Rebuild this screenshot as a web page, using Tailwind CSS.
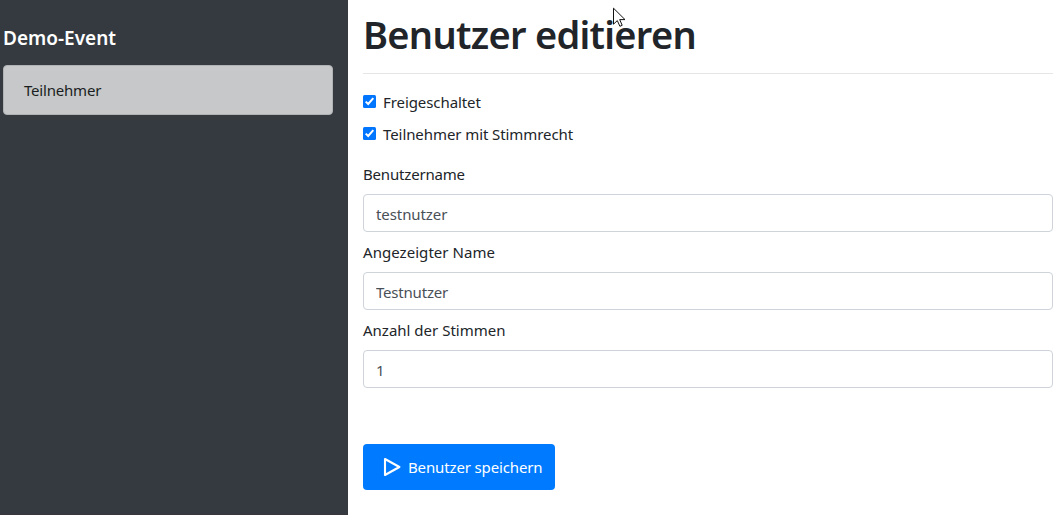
<!DOCTYPE html>
<html lang="de">
<head>
<meta charset="utf-8">
<title>Benutzer editieren</title>
<script src="https://cdn.jsdelivr.net/npm/@tailwindcss/browser@4"></script>
</head>
<body class="relative flex h-[515px] w-[1061px] overflow-hidden bg-white font-['Segoe_UI','Noto_Sans',sans-serif] text-[15px] leading-6 tracking-[-0.08px] text-[#212529]">
  <aside class="flex w-[348px] shrink-0 flex-col border-b border-[#3a3640] bg-[#343a40] pt-[26px] pr-[15px] pl-[3px]">
    <h2 class="text-[19px] leading-6 font-semibold text-white"><span class="tracking-[0px]">Demo-Event</span></h2>
    <a class="mt-[15px] flex h-[50px] items-center rounded-[4px] border border-[#b0b2b4] bg-[#c6c8ca] pl-5 tracking-[-0.2px] text-[#1b1e21]"><span>Teilnehmer</span></a>
  </aside>
  <main class="flex flex-1 flex-col pr-2 pl-[15px]">
    <h1 class="mt-[10px] h-[50px] text-[38px] leading-[48px] font-semibold tracking-[-0.7px]"><span>Benutzer editieren</span></h1>
    <hr class="mt-[13px] border-t border-[#e5e5e5]">
    <div class="mt-4 flex flex-col gap-2">
      <label class="flex h-6 items-center gap-[7px]">
        <svg class="mb-[1px] size-[13px]" viewBox="0 0 13 13"><rect width="13" height="13" rx="1.5" fill="#0075ff"/><path d="M2.7 6.6 5.2 9 10.3 3.2" fill="none" stroke="#fff" stroke-width="2"/></svg>
        <span>Freigeschaltet</span>
      </label>
      <label class="flex h-6 items-center gap-[7px]">
        <svg class="mb-[1px] size-[13px]" viewBox="0 0 13 13"><rect width="13" height="13" rx="1.5" fill="#0075ff"/><path d="M2.7 6.6 5.2 9 10.3 3.2" fill="none" stroke="#fff" stroke-width="2"/></svg>
        <span>Teilnehmer mit Stimmrecht</span>
      </label>
    </div>
    <div class="mt-4 flex flex-col gap-2">
      <label class="flex flex-col gap-2"><span class="tracking-[-0.18px]">Benutzername</span>
        <input class="h-[38px] rounded-[4px] border border-[#ced4da] px-3 pt-[1px] text-[#495057]" value="testnutzer"></label>
      <label class="flex flex-col gap-2"><span class="tracking-[0.05px]">Angezeigter Name</span>
        <input class="h-[38px] rounded-[4px] border border-[#ced4da] px-3 pt-[1px] tracking-[-0.2px] text-[#495057]" value="Testnutzer"></label>
      <label class="flex flex-col gap-2"><span class="tracking-[0px]">Anzahl der Stimmen</span>
        <input class="h-[38px] rounded-[4px] border border-[#ced4da] px-3 pt-[1px] text-[#495057]" value="1"></label>
    </div>
    <button class="mt-14 flex h-[46px] w-48 items-center rounded-[4px] bg-[#007bff] pl-[20px] text-white">
      <svg class="mr-[7px] h-[20px] w-[18px]" viewBox="0 0 18 20" fill="none" stroke="#fff" stroke-width="2.1" stroke-linejoin="round"><path d="M2 2 16.4 10 2 18Z"/></svg>
      <span class="tracking-[-0.14px] whitespace-nowrap">Benutzer speichern</span>
    </button>
  </main>
  <svg class="absolute top-[7px] left-[613px] h-5 w-[13px]" viewBox="0 0 13 20"><path d="M.5 1.2V17.2L4.3 13.6 6.9 19.3 9.2 18.3 6.7 12.6H12Z" fill="#fff" stroke="#111" stroke-width="1"/></svg>
</body>
</html>
